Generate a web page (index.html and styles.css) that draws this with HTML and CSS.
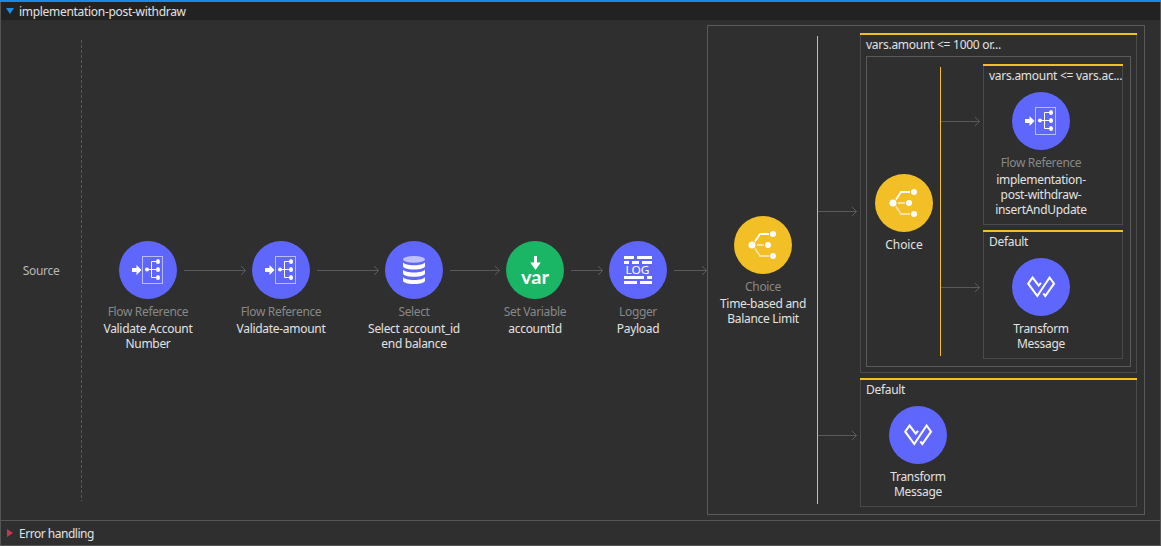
FILE: index.html
```html
<!DOCTYPE html>
<html lang="en">
<head>
<meta charset="utf-8">
<title>implementation-post-withdraw</title>
<link rel="stylesheet" href="styles.css">
</head>
<body>
<svg class="defs" width="0" height="0">
  <defs>
    <symbol id="flowref" viewBox="0 0 58 58">
      <path d="M13 27h4.500v-3l5 5-5 5v-3H13z" fill="#fff"/>
      <rect x="23.500" y="15.500" width="20" height="27" fill="none" stroke="#b9bbff"/>
      <path d="M28 28.500h11M39 20.500h-6.500v16H39" fill="none" stroke="#fff"/>
      <g fill="#fff"><circle cx="28" cy="28.500" r="2"/><ellipse cx="39" cy="20.500" rx="2" ry="2.500"/><ellipse cx="39" cy="28.500" rx="2" ry="2.500"/><ellipse cx="39" cy="36.500" rx="2" ry="2.500"/></g>
    </symbol>
    <symbol id="choice" viewBox="0 0 58 58">
      <g fill="none" stroke="#fff" stroke-width="1.800"><path d="M21 25.500 26 18h9"/><path d="M23 29h7M21 32.500 26 40h9" opacity=".55"/></g>
      <g fill="#fff"><circle cx="18" cy="29" r="3.500"/><circle cx="39" cy="18" r="3"/><circle cx="34" cy="29" r="3"/><circle cx="39" cy="40" r="3"/></g>
    </symbol>
    <symbol id="transform" viewBox="0 0 58 58">
      <path d="M29 24.800 26.700 27.600 20.600 19.500 16.200 25.700 25.300 38 37.600 19.500 42 25.700 33.300 38 31.300 35.300" fill="none" stroke="#fff" stroke-width="2.100"/>
    </symbol>
    <symbol id="database" viewBox="0 0 58 58">
      <ellipse cx="29" cy="18.400" rx="11" ry="3.400" fill="#bfc0ff"/>
      <path id="slab" d="M18 21.300c1 2 5.500 3 11 3s10-1 11-3v3.700c0 2-4.500 3.500-11 3.500s-11-1.500-11-3.500z" fill="#fff"/>
      <use href="#slab" y="7.300"/><use href="#slab" y="14.600"/>
    </symbol>
    <symbol id="variable" viewBox="0 0 58 58">
      <path d="M28 15h3v6.500h3.800L29.500 29l-5.300-7.500H28z" fill="#fff"/>
      <text class="glyph-var" x="15" y="43.300" textLength="28" lengthAdjust="spacingAndGlyphs">var</text>
    </symbol>
    <symbol id="log" viewBox="0 0 58 58">
      <path d="M15 15h10v3H15zM28 15h15v3H28zM15 20h5v3h-5zM23 20h7v3h-7zM33 20h10v3H33zM15 35h20v3H15zM38 35h5v3h-5zM15 40h13v3H15zM31 40h12v3H31z" fill="#fff"/>
      <text class="glyph-log" x="16.500" y="33" textLength="24" lengthAdjust="spacingAndGlyphs">LOG</text>
    </symbol>
  </defs>
</svg>

<main class="flow">
  <header class="flow-header"><svg class="marker" width="8" height="6"><path d="M0 0h8L4 6z" fill="#1592f0"/></svg><span>implementation-post-withdraw</span></header>

  <section class="canvas">
    <div class="source">Source</div>
    <div class="divider"></div>

    <div class="node first"><svg class="disc blue"><use href="#flowref"/></svg><span class="kind">Flow Reference</span><span class="name">Validate Account<br>Number</span></div>
    <svg class="arrow" width="62" height="9"><path d="M0 4.500h62M57 0l4.500 4.500L57 9"/></svg>
    <div class="node"><svg class="disc blue"><use href="#flowref"/></svg><span class="kind">Flow Reference</span><span class="name">Validate-amount</span></div>
    <svg class="arrow" width="62" height="9"><path d="M0 4.500h62M57 0l4.500 4.500L57 9"/></svg>
    <div class="node"><svg class="disc blue"><use href="#database"/></svg><span class="kind">Select</span><span class="name">Select account_id<br>end balance</span></div>
    <svg class="arrow" width="50" height="9"><path d="M0 4.500h50M45 0l4.500 4.500L45 9"/></svg>
    <div class="node"><svg class="disc green"><use href="#variable"/></svg><span class="kind">Set Variable</span><span class="name">accountId</span></div>
    <svg class="arrow" width="32" height="9"><path d="M0 4.500h32M27 0l4.500 4.500L27 9"/></svg>
    <div class="node"><svg class="disc blue"><use href="#log"/></svg><span class="kind">Logger</span><span class="name">Payload</span></div>
    <svg class="arrow last" width="33" height="9"><path d="M0 4.500h33M28 0l4.500 4.500L28 9"/></svg>

    <div class="scope outer">
      <div class="node"><svg class="disc yellow"><use href="#choice"/></svg><span class="kind">Choice</span><span class="name">Time-based and<br>Balance Limit</span></div>
      <div class="rail"></div>
      <div class="branches">
        <svg class="branch" width="39" height="9"><path d="M0 4.500h39M34 0l4.500 4.500L34 9"/></svg>
        <svg class="branch" width="39" height="9"><path d="M0 4.500h39M34 0l4.500 4.500L34 9"/></svg>
      </div>
      <div class="routes">
        <div class="route tall">
          <div class="route-body">
            <div class="route-title condition">vars.amount &lt;= 1000 or...</div>
            <div class="scope inner">
              <div class="node"><svg class="disc yellow"><use href="#choice"/></svg><span class="name choice-name">Choice</span></div>
              <div class="rail"></div>
              <div class="branches">
                <svg class="branch" width="39" height="9"><path d="M0 4.500h39M34 0l4.500 4.500L34 9"/></svg>
                <svg class="branch" width="39" height="9"><path d="M0 4.500h39M34 0l4.500 4.500L34 9"/></svg>
              </div>
              <div class="routes">
                <div class="route mid">
                  <div class="route-body">
                    <div class="route-title condition">vars.amount &lt;= vars.ac...</div>
                    <div class="node"><svg class="disc blue"><use href="#flowref"/></svg><span class="kind">Flow Reference</span><span class="name">implementation-<br>post-withdraw-<br>insertAndUpdate</span></div>
                  </div>
                </div>
                <div class="route">
                  <div class="route-body">
                    <div class="route-title">Default</div>
                    <div class="node"><svg class="disc blue"><use href="#transform"/></svg><span class="name">Transform<br>Message</span></div>
                  </div>
                </div>
              </div>
            </div>
          </div>
        </div>
        <div class="route">
          <div class="route-body">
            <div class="route-title">Default</div>
            <div class="node"><svg class="disc blue"><use href="#transform"/></svg><span class="name">Transform<br>Message</span></div>
          </div>
        </div>
      </div>
    </div>
  </section>

  <footer class="flow-footer"><svg class="marker" width="6" height="8"><path d="M0 0l6 4-6 4z" fill="#cf3350"/></svg><span>Error handling</span></footer>
</main>
</body>
</html>
```
FILE: styles.css
```css
* { box-sizing: border-box; }

body {
  margin: 0;
  background: #2f2f2f;
  color: #e2e2e2;
  font: 12px/15px "Noto Sans", "Open Sans", sans-serif;
  letter-spacing: -0.3px;
  overflow: hidden;
}

svg { display: block; flex: none; }
.defs { position: absolute; }

.flow {
  display: flex;
  flex-direction: column;
  width: 1161px;
  height: 546px;
  border-top: 2px solid #1a88e6;
}

.flow-header, .flow-footer, .canvas {
  border: 0 solid #555;
  border-width: 0 1px;
}

.flow-header {
  display: flex;
  align-items: center;
  height: 18px;
  padding-left: 5px;
  gap: 5px;
  background: #222;
}
.flow-header .marker { margin-top: -1px; }

.flow-footer {
  display: flex;
  align-items: center;
  height: 26px;
  padding-left: 6px;
  gap: 6px;
  border-width: 1px;
  letter-spacing: -0.48px;
}
.flow-footer .marker { margin-top: -1px; }

.canvas {
  display: flex;
  align-items: flex-start;
  height: 500px;
}

.source {
  width: 80px;
  margin-top: 243px;
  text-align: center;
  color: #b8b8b8;
}

.divider {
  width: 1px;
  height: 461px;
  margin-top: 20px;
  background: repeating-linear-gradient(#5a5a5a 0 3px, transparent 3px 5px);
}

.node {
  display: flex;
  flex: none;
  flex-direction: column;
  align-items: center;
  width: 58px;
  white-space: nowrap;
  text-align: center;
}
.canvas > .node { margin-top: 221px; }
.canvas > .first { margin-left: 37px; }

.disc { width: 58px; height: 58px; margin-bottom: 5px; border-radius: 50%; }
.blue { background: #5f66fb; }
.green { background: #1bb566; }
.yellow { background: #f2bf26; }

.kind { margin-bottom: 2px; color: #888; letter-spacing: -0.35px; }
.choice-name { letter-spacing: -0.1px; }

.glyph-var { fill: #fff; font: 700 18px Lato, sans-serif; letter-spacing: 0; }
.glyph-log { fill: #fff; font: 400 11px "Noto Sans", sans-serif; letter-spacing: 0; }

.arrow, .branch { fill: none; stroke: #5a5a5a; stroke-width: 1px; }
.arrow { margin: 246px 6px 0 7px; }
.arrow.last { margin-right: 0; }

.scope { display: flex; align-items: flex-start; flex: none; border: 1px solid #5a5a5a; }
.outer { width: 438px; height: 490px; margin-top: 5px; }
.inner { width: 265px; height: 311px; margin-left: 5px; }

.outer > .node { margin: 190px 25px 0 26px; }
.inner > .node { margin: 117px 7px 0 8px; }

.rail { flex: none; width: 1px; margin-top: 10px; background: #f2bf26; }
.outer > .rail { height: 468px; }
.inner > .rail { height: 289px; }

.branches { flex: none; width: 42px; display: flex; flex-direction: column; }
.outer > .branches { padding-top: 181px; gap: 215px; }
.inner > .branches { padding-top: 60px; gap: 157px; }

.routes { display: flex; flex-direction: column; gap: 5px; margin-top: 7px; }
.outer > .routes { width: 277px; }
.inner > .routes { width: 140px; }

.route { display: flex; height: 129px; padding-top: 2px; background: linear-gradient(#f2bf26 2px, transparent 2px); }
.route.tall { height: 340px; }
.route.mid { height: 161px; }
.route-body { flex: 1; min-width: 0; border: 1px solid #4a4a4a; border-top: 0; }
.route-title { height: 21px; padding: 2px 0 0 5px; white-space: nowrap; }
.condition { letter-spacing: -0.27px; }
.route-body > .node { margin: 5px 0 0 28px; }
```
